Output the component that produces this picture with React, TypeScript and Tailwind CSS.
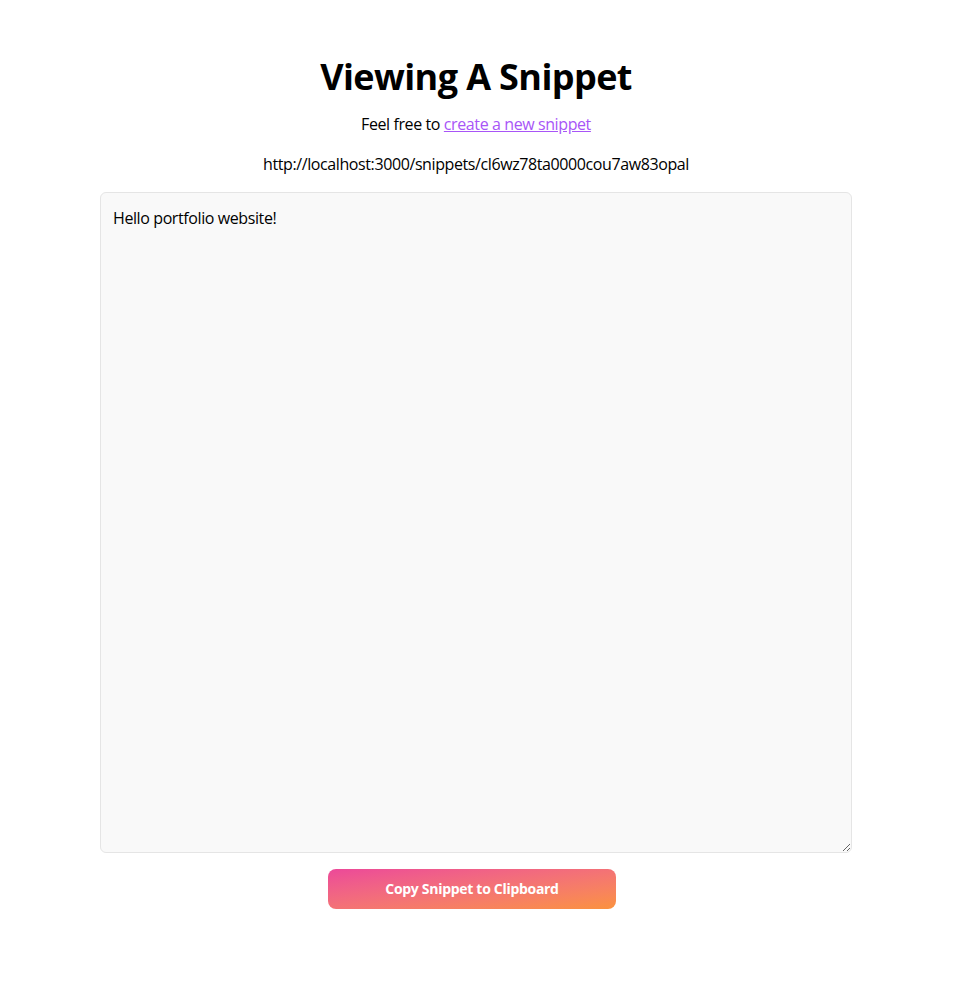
export default function App() {
  return (
    <div className="min-h-screen bg-white pr-[3px] text-black font-['Open_Sans',sans-serif]">
      <main className="mx-auto flex w-[752px] flex-col items-center pt-[57px]">
        <h1 className="text-4xl font-bold leading-[40px] tracking-[-0.6px]">Viewing A Snippet</h1>
        <p className="mt-[15px] text-base leading-6 tracking-[-0.4px]">
          Feel free to{' '}
          <a href="#" className="text-[#a855f7] underline">
            create a new snippet
          </a>
        </p>
        <p className="mt-4 text-base leading-6 tracking-[-0.4px]">
          http://localhost:3000/snippets/cl6wz78ta0000cou7aw83opal
        </p>
        <textarea
          className="mt-4 h-[661px] w-full resize-y rounded-md border border-neutral-200 bg-[#f9f9f9] px-3 pt-[13px] pb-3 text-base leading-6 tracking-[-0.4px] outline-none"
          defaultValue="Hello portfolio website!"
        />
        <button className="mt-4 mr-[8px] h-10 w-72 rounded-lg bg-gradient-to-br from-[#ec4899] to-[#fb923c] text-sm font-bold tracking-[-0.3px] text-white">
          Copy Snippet to Clipboard
        </button>
      </main>
    </div>
  );
}
